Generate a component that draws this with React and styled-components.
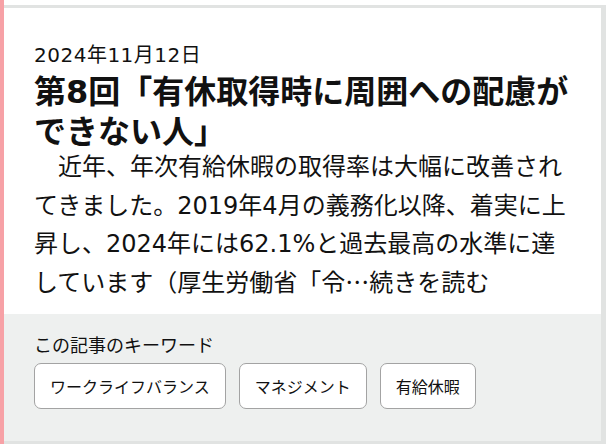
import React from "react";
import styled, { createGlobalStyle } from "styled-components";

const Global = createGlobalStyle`
  html, body { margin: 0; padding: 0; background: #ffffff; }
  body { font-family: "DejaVu Sans", "Noto Sans CJK JP", sans-serif; color: #111111; }
  * { box-sizing: border-box; }
`;

const Page = styled.div`
  width: 606px;
  height: 444px;
  border-left: 4px solid #f7a1a6;
  padding-top: 5px;
  background: #ffffff;
  display: flex;
  flex-direction: column;
`;

const Card = styled.article`
  flex: 1;
  display: flex;
  flex-direction: column;
  border-top: 3px solid #e1e3e2;
  border-right: 5px solid #e1e3e2;
  border-bottom: 3px solid #e1e3e2;
`;

const Body = styled.div`
  padding: 34px 30px 12px 30px;
  background: #ffffff;
`;

const DateLine = styled.div`
  font-size: 20px;
  line-height: 26px;
  letter-spacing: 0.5px;
`;

const Title = styled.h2`
  margin: 4px 0 0;
  font-size: 32px;
  font-weight: 700;
  line-height: 40px;
`;

const Lead = styled.p`
  margin: -4px 0 0;
  font-size: 24px;
  line-height: 38.5px;
  text-indent: 1em;
`;

const Ellipsis = styled.span`
  font-family: "Noto Sans CJK JP", sans-serif;
  line-height: 1;
`;

const Footer = styled.div`
  flex: 1;
  background: #eef0ef;
  padding: 20px 30px 0 30px;
  display: flex;
  flex-direction: column;
  gap: 5px;
`;

const Label = styled.div`
  font-size: 18px;
  line-height: 24px;
`;

const Tags = styled.div`
  display: flex;
  gap: 13px;
`;

const Tag = styled.a`
  display: inline-flex;
  align-items: center;
  height: 46px;
  padding: 0 15px;
  background: #ffffff;
  border: 1px solid #a3a3a3;
  border-radius: 7px;
  font-size: 16px;
  color: #111111;
  text-decoration: none;
`;

export default function App() {
  return (
    <>
      <Global />
      <Page>
        <Card>
          <Body>
            <DateLine>2024年11月12日</DateLine>
            <Title>第8回「有休取得時に周囲への配慮ができない人」</Title>
            <Lead>
              近年、年次有給休暇の取得率は大幅に改善されてきました。2019年4月の義務化以降、着実に上昇し、2024年には62.1%と過去最高の水準に達しています（厚生労働省「令<Ellipsis>…</Ellipsis>続きを読む
            </Lead>
          </Body>
          <Footer>
            <Label>この記事のキーワード</Label>
            <Tags>
              <Tag>ワークライフバランス</Tag>
              <Tag>マネジメント</Tag>
              <Tag>有給休暇</Tag>
            </Tags>
          </Footer>
        </Card>
      </Page>
    </>
  );
}
